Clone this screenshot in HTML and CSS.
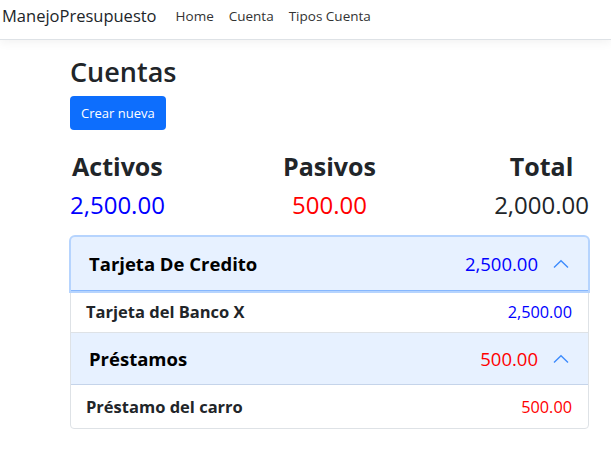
FILE: index.html
```html
<!DOCTYPE html>
<html lang="es">
<head>
<meta charset="utf-8">
<title>Cuentas - ManejoPresupuesto</title>
<link rel="stylesheet" href="styles.css">
</head>
<body>
<header class="navbar">
  <a class="brand" href="#">ManejoPresupuesto</a>
  <nav class="nav">
    <a class="nav-link" href="#">Home</a>
    <a class="nav-link" href="#">Cuenta</a>
    <a class="nav-link" href="#">Tipos Cuenta</a>
  </nav>
</header>
<main class="main">
  <h1 class="title">Cuentas</h1>
  <a class="btn" href="#">Crear nueva</a>

  <section class="summary">
    <div class="sum-col">
      <div class="sum-label">Activos</div>
      <div class="sum-value activo">2,500.00</div>
    </div>
    <div class="sum-col">
      <div class="sum-label">Pasivos</div>
      <div class="sum-value pasivo">500.00</div>
    </div>
    <div class="sum-col">
      <div class="sum-label">Total</div>
      <div class="sum-value">2,000.00</div>
    </div>
  </section>

  <section class="accordion">
    <div class="acc-item">
      <div class="acc-header focused">
        <span class="acc-title">Tarjeta De Credito</span>
        <span class="acc-amount activo">2,500.00</span>
        <svg class="chev" viewBox="0 0 16 10" width="16" height="10"><path d="M1 8.5 L8 1.8 L15 8.5" fill="none" stroke="#3d8bfd" stroke-width="1.4"/></svg>
      </div>
      <div class="acc-body">
        <span class="row-name">Tarjeta del Banco X</span>
        <span class="row-amount activo">2,500.00</span>
      </div>
    </div>
    <div class="acc-item">
      <div class="acc-header second">
        <span class="acc-title">Préstamos</span>
        <span class="acc-amount pasivo">500.00</span>
        <svg class="chev" viewBox="0 0 16 10" width="16" height="10"><path d="M1 8.5 L8 1.8 L15 8.5" fill="none" stroke="#3d8bfd" stroke-width="1.4"/></svg>
      </div>
      <div class="acc-body last">
        <span class="row-name">Préstamo del carro</span>
        <span class="row-amount pasivo">500.00</span>
      </div>
    </div>
  </section>
</main>
</body>
</html>
```
FILE: styles.css
```css
* { box-sizing: border-box; }
body {
  margin: 0;
  font-family: "Open Sans", "Noto Sans", sans-serif;
  color: #212529;
  background: #fff;
}
a { text-decoration: none; }

.navbar {
  display: flex;
  align-items: center;
  height: 40px;
  padding: 0 0 8px 2px;
  border-bottom: 1px solid #dee2e6;
  box-shadow: 0 3px 9px rgba(0,0,0,0.05);
}
.brand {
  font-size: 16.5px;
  color: #212529;
  margin-right: 19px;
}
.nav { display: flex; gap: 15px; }
.nav-link {
  font-size: 13.5px;
  color: #333;
}

.main {
  margin-left: 70px;
  width: 519px;
}
.title {
  font-size: 27px;
  font-weight: 600;
  margin: 16px 0 8px;
  line-height: 1.2;
}
.btn {
  display: inline-block;
  background: #0d6efd;
  color: #fff;
  font-size: 13px;
  line-height: 34px;
  height: 34px;
  padding: 0 11px;
  border-radius: 4px;
}

.summary {
  display: grid;
  grid-template-columns: auto 1fr auto;
  margin-top: 21px;
  text-align: center;
}
.sum-label {
  font-size: 25px;
  font-weight: 700;
  line-height: 1.2;
  margin-bottom: 6px;
}
.sum-value {
  font-size: 24px;
  line-height: 1.5;
}
.activo { color: #0000ff; }
.pasivo { color: #ff0000; }

.accordion {
  margin-top: 13px;
  border: 1px solid #dee2e6;
  border-radius: 4px;
}
.acc-header {
  display: flex;
  align-items: center;
  height: 54px;
  padding: 0 19px 0 18px;
  background: #e7f1ff;
  border-bottom: 1px solid #c5d4ea;
}
.acc-header.second { height: 52px; }
.acc-header.focused {
  border-radius: 4px 4px 0 0;
  box-shadow: 0 0 0 2px #b6d4fe;
  border-bottom-color: #86b7fe;
  position: relative;
}
.acc-title {
  font-size: 18.5px;
  font-weight: 700;
  color: #000;
  flex: 1;
}
.acc-amount {
  font-size: 18.5px;
  margin-right: 15px;
}
.chev { display: block; }

.acc-body {
  display: flex;
  align-items: center;
  justify-content: space-between;
  height: 42px;
  padding: 0 16px 0 15px;
  border-bottom: 1px solid #dee2e6;
}
.acc-body.last { border-bottom: 0; height: 43px; }
.row-name {
  font-size: 16.5px;
  font-weight: 700;
}
.row-amount { font-size: 16.3px; }
```
